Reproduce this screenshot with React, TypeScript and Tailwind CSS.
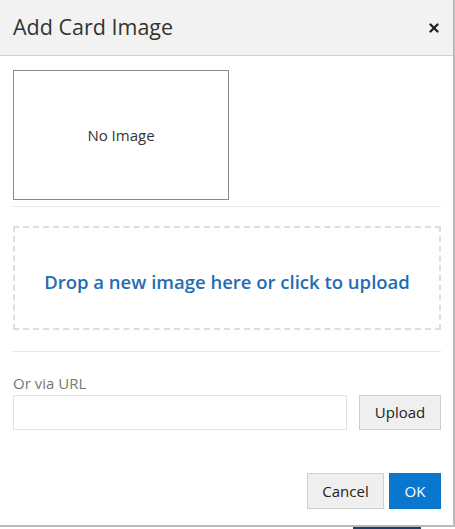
import { X } from 'lucide-react';

const font = { fontFamily: '"Open Sans", "Noto Sans", Arial, sans-serif' };

export default function App() {
  return (
    <div className="w-[455px] h-[529px] bg-white overflow-hidden" style={font}>
      {/* Dialog */}
      <div className="w-[455px] h-[527px] bg-white border-r-2 border-b-2 border-[#b9b9b9] flex flex-col">
        {/* Header */}
        <header className="h-[56px] shrink-0 bg-[#f2f2f2] border-b border-[#d2d2d2] flex items-center justify-between pl-[13px] pr-[12px]">
          <h1 className="text-[21.5px] text-[#333] leading-none -mt-[1px]">Add Card Image</h1>
          <X className="w-[14px] h-[14px] text-[#222]" strokeWidth={4} />
        </header>

        {/* Body */}
        <div className="flex-1 pl-[13px] pr-[12px] pt-[14px] flex flex-col">
          {/* Current image */}
          <div className="w-[216px] h-[130px] border border-[#8a8a8a] flex items-center justify-center">
            <span className="text-[15px] text-[#333]">No Image</span>
          </div>

          <div className="mt-[6px] border-t border-[#e6e6e6]" />

          {/* Drop zone */}
          <div className="mt-[19px] h-[104px] border-2 border-dashed border-[#dedede] flex items-center justify-center">
            <span className="mt-[7px] text-[18.5px] font-semibold text-[#1f6db3]">
              Drop a new image here or click to upload
            </span>
          </div>

          <div className="mt-[21px] border-t border-[#e6e6e6]" />

          {/* URL */}
          <label className="mt-[21px] text-[15px] text-[#777] leading-5">Or via URL</label>
          <div className="mt-[2px] flex gap-[12px]">
            <input className="flex-1 h-[35px] border border-[#e2e2e2] bg-white outline-none px-2 text-[14px]" />
            <button className="w-[82px] h-[35px] border border-[#cfcfcf] bg-[#efefef] text-[15px] text-[#222]">
              Upload
            </button>
          </div>

          {/* Footer */}
          <div className="mt-[43px] flex justify-end gap-[5px]">
            <button className="w-[77px] h-[36px] border border-[#cfcfcf] bg-[#efefef] text-[15px] text-[#222]">
              Cancel
            </button>
            <button className="w-[52px] h-[36px] bg-[#0a77cf] text-[15px] text-white">OK</button>
          </div>
        </div>
      </div>
      <div className="h-[2px] flex">
        <div className="w-[353px]" />
        <div className="w-[68px] bg-[#1d3f66]" />
      </div>
    </div>
  );
}
